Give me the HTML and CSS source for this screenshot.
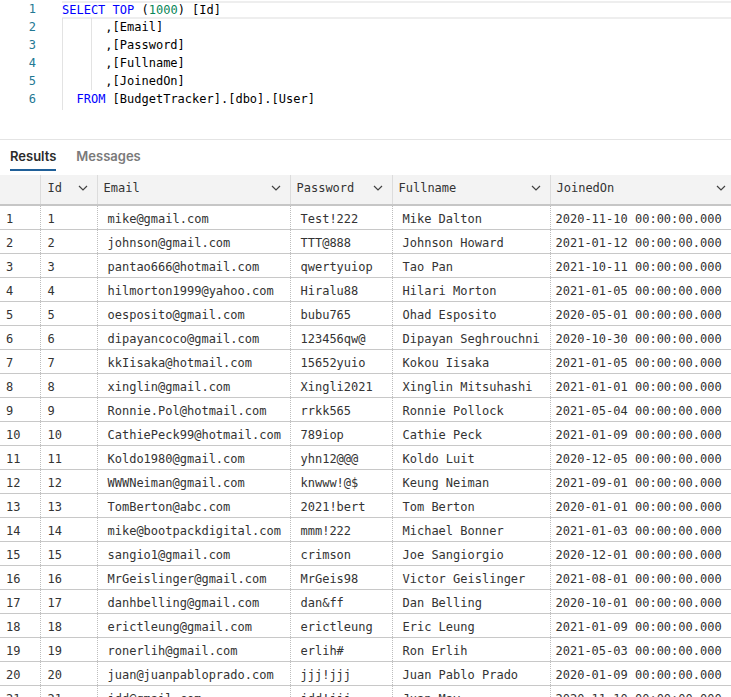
FILE: index.html
```html
<!DOCTYPE html>
<html>
<head>
<meta charset="utf-8">
<link rel="stylesheet" href="styles.css">
</head>
<body>
<div class="editor">
  <div class="gutter">
    <div class="ln">1</div><div class="ln">2</div><div class="ln">3</div><div class="ln">4</div><div class="ln">5</div><div class="ln">6</div>
  </div>
  <div class="code">
    <div class="guide g1"></div>
    <div class="guide g2"></div>
    <div class="line current"><span class="kw">SELECT</span> <span class="kw">TOP</span> (<span class="num">1000</span>) [Id]</div>
    <div class="line">      ,[Email]</div>
    <div class="line">      ,[Password]</div>
    <div class="line">      ,[Fullname]</div>
    <div class="line">      ,[JoinedOn]</div>
    <div class="line">  <span class="kw">FROM</span> [BudgetTracker].[dbo].[User]</div>
  </div>
</div>
<div class="results">
  <div class="tabs">
    <div class="tab active">Results</div>
    <div class="tab">Messages</div>
  </div>
  <table class="grid">
    <colgroup>
      <col class="c0"><col class="c1"><col class="c2"><col class="c3"><col class="c4"><col class="c5">
    </colgroup>
    <thead>
      <tr>
        <th></th>
        <th><div class="hc"><span>Id</span><svg class="chev" viewBox="0 0 10 6"><path d="M1 1 L5 5 L9 1"/></svg></div></th>
        <th><div class="hc"><span>Email</span><svg class="chev" viewBox="0 0 10 6"><path d="M1 1 L5 5 L9 1"/></svg></div></th>
        <th><div class="hc"><span>Password</span><svg class="chev" viewBox="0 0 10 6"><path d="M1 1 L5 5 L9 1"/></svg></div></th>
        <th><div class="hc"><span>Fullname</span><svg class="chev" viewBox="0 0 10 6"><path d="M1 1 L5 5 L9 1"/></svg></div></th>
        <th><div class="hc"><span>JoinedOn</span><svg class="chev" viewBox="0 0 10 6"><path d="M1 1 L5 5 L9 1"/></svg></div></th>
      </tr>
    </thead>
    <tbody>
      <tr><td>1</td><td>1</td><td>mike@gmail.com</td><td>Test!222</td><td>Mike Dalton</td><td>2020-11-10 00:00:00.000</td></tr>
      <tr><td>2</td><td>2</td><td>johnson@gmail.com</td><td>TTT@888</td><td>Johnson Howard</td><td>2021-01-12 00:00:00.000</td></tr>
      <tr><td>3</td><td>3</td><td>pantao666@hotmail.com</td><td>qwertyuiop</td><td>Tao Pan</td><td>2021-10-11 00:00:00.000</td></tr>
      <tr><td>4</td><td>4</td><td>hilmorton1999@yahoo.com</td><td>Hiralu88</td><td>Hilari Morton</td><td>2021-01-05 00:00:00.000</td></tr>
      <tr><td>5</td><td>5</td><td>oesposito@gmail.com</td><td>bubu765</td><td>Ohad Esposito</td><td>2020-05-01 00:00:00.000</td></tr>
      <tr><td>6</td><td>6</td><td>dipayancoco@gmail.com</td><td>123456qw@</td><td>Dipayan Seghrouchni</td><td>2020-10-30 00:00:00.000</td></tr>
      <tr><td>7</td><td>7</td><td>kkIisaka@hotmail.com</td><td>15652yuio</td><td>Kokou Iisaka</td><td>2021-01-05 00:00:00.000</td></tr>
      <tr><td>8</td><td>8</td><td>xinglin@gmail.com</td><td>Xingli2021</td><td>Xinglin Mitsuhashi</td><td>2021-01-01 00:00:00.000</td></tr>
      <tr><td>9</td><td>9</td><td>Ronnie.Pol@hotmail.com</td><td>rrkk565</td><td>Ronnie Pollock</td><td>2021-05-04 00:00:00.000</td></tr>
      <tr><td>10</td><td>10</td><td>CathiePeck99@hotmail.com</td><td>789iop</td><td>Cathie Peck</td><td>2021-01-09 00:00:00.000</td></tr>
      <tr><td>11</td><td>11</td><td>Koldo1980@gmail.com</td><td>yhn12@@@</td><td>Koldo Luit</td><td>2020-12-05 00:00:00.000</td></tr>
      <tr><td>12</td><td>12</td><td>WWWNeiman@gmail.com</td><td>knwww!@$</td><td>Keung Neiman</td><td>2021-09-01 00:00:00.000</td></tr>
      <tr><td>13</td><td>13</td><td>TomBerton@abc.com</td><td>2021!bert</td><td>Tom Berton</td><td>2020-01-01 00:00:00.000</td></tr>
      <tr><td>14</td><td>14</td><td>mike@bootpackdigital.com</td><td>mmm!222</td><td>Michael Bonner</td><td>2021-01-03 00:00:00.000</td></tr>
      <tr><td>15</td><td>15</td><td>sangio1@gmail.com</td><td>crimson</td><td>Joe Sangiorgio</td><td>2020-12-01 00:00:00.000</td></tr>
      <tr><td>16</td><td>16</td><td>MrGeislinger@gmail.com</td><td>MrGeis98</td><td>Victor Geislinger</td><td>2021-08-01 00:00:00.000</td></tr>
      <tr><td>17</td><td>17</td><td>danhbelling@gmail.com</td><td>dan&amp;ff</td><td>Dan Belling</td><td>2020-10-01 00:00:00.000</td></tr>
      <tr><td>18</td><td>18</td><td>erictleung@gmail.com</td><td>erictleung</td><td>Eric Leung</td><td>2021-01-09 00:00:00.000</td></tr>
      <tr><td>19</td><td>19</td><td>ronerlih@gmail.com</td><td>erlih#</td><td>Ron Erlih</td><td>2021-05-03 00:00:00.000</td></tr>
      <tr><td>20</td><td>20</td><td>juan@juanpabloprado.com</td><td>jjj!jjj</td><td>Juan Pablo Prado</td><td>2020-01-09 00:00:00.000</td></tr>
      <tr><td>21</td><td>21</td><td>jdd@gmail.com</td><td>jdd!jjj</td><td>Juan May</td><td>2020-11-10 00:00:00.000</td></tr>
    </tbody>
  </table>
</div>
</body>
</html>
```
FILE: styles.css
```css
html, body {
  margin: 0;
  padding: 0;
  background: #ffffff;
  overflow: hidden;
  height: 697px;
}
body {
  font-family: "DejaVu Sans Mono", monospace;
  font-size: 12px;
  color: #333333;
}
.editor {
  display: flex;
  height: 140px;
  border-bottom: 1px solid #e4e4e4;
  box-sizing: border-box;
}
.gutter {
  width: 62px;
  flex: none;
}
.ln {
  height: 18px;
  line-height: 18px;
  width: 36px;
  text-align: right;
  color: #237893;
}
.code {
  flex: 1;
  position: relative;
}
.line {
  height: 18px;
  line-height: 18px;
  white-space: pre;
  color: #000000;
  box-sizing: border-box;
}
.line.current {
  border-top: 2px solid #eeeeee;
  border-bottom: 2px solid #eeeeee;
  line-height: 14px;
  margin-top: 1px;
  height: 18px;
  margin-bottom: -1px;
}
.kw { color: #0000ff; }
.num { color: #098658; }
.guide {
  position: absolute;
  width: 1px;
  background: #e3e3e3;
}
.g1 { left: 0; top: 18px; height: 92px; }
.g2 { left: 29px; top: 18px; height: 72px; }
.tabs {
  display: flex;
  gap: 20px;
  padding-left: 10px;
  height: 35px;
  box-sizing: border-box;
  font-family: "Inter", "Noto Sans", sans-serif;
  font-size: 13px;
  font-weight: 600;
}
.tab {
  padding-top: 8px;
  height: 31px;
  box-sizing: border-box;
  color: #7a7a7a;
}
.tab.active {
  color: #2b2b2b;
  border-bottom: 2px solid #1f5f98;
}
.grid {
  border-collapse: collapse;
  table-layout: fixed;
  width: 735px;
  color: #333333;
}
.c0 { width: 40px; }
.c1 { width: 57px; }
.c2 { width: 193px; }
.c3 { width: 102px; }
.c4 { width: 158px; }
.c5 { width: 185px; }
th {
  background: #f3f3f3;
  height: 29px;
  padding: 0;
  vertical-align: top;
  font-weight: normal;
  text-align: left;
  border-left: 1px solid #dcdcdc;
  border-bottom: 2px solid #c6c6c6;
}
th:first-child { border-left: none; }
.hc {
  display: flex;
  align-items: center;
  justify-content: space-between;
  height: 24px;
  padding: 1px 9px 0 6px;
}
th:nth-child(2) .hc { padding-left: 7px; }
.chev {
  width: 10px;
  height: 6px;
  fill: none;
  stroke: #424242;
  stroke-width: 1.2;
}
td {
  height: 20px;
  padding: 3px 0 0 10px;
  white-space: nowrap;
  overflow: hidden;
  border-left: 1px dotted #bdbdbd;
  border-bottom: 1px solid #c8c8c8;
  line-height: 20px;
  vertical-align: top;
}
td:first-child { border-left: none; padding-left: 6px; }
td:nth-child(2) { padding-left: 7px; }
td:nth-child(6) { padding-left: 5px; }
```
